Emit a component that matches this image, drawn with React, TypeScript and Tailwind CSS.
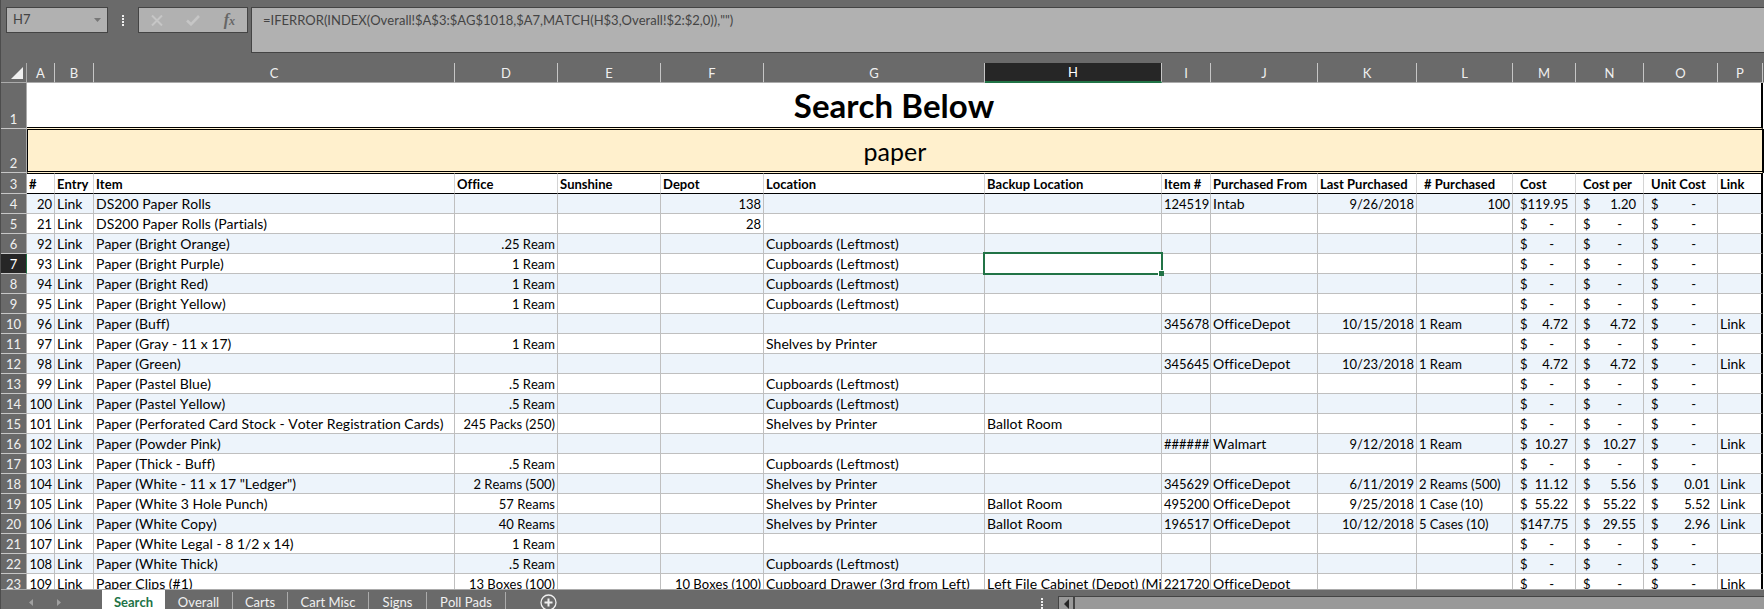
import React, { useState } from "react";

type Align = "left" | "right";

interface Row {
  n: number;
  item: string;
  office?: string;
  depot?: string;
  location?: string;
  backup?: string;
  itemNo?: string;
  vendor?: string;
  date?: string;
  qty?: string;
  cost?: string;
  costPer?: string;
  unit?: string;
  link?: boolean;
}

const CUP = "Cupboards (Leftmost)";
const SHELF = "Shelves by Printer";

const rows: Row[] = [
  { n: 20, item: "DS200 Paper Rolls", depot: "138", itemNo: "124519", vendor: "Intab", date: "9/26/2018", qty: "100", cost: "119.95", costPer: "1.20" },
  { n: 21, item: "DS200 Paper Rolls (Partials)", depot: "28" },
  { n: 92, item: "Paper (Bright Orange)", office: ".25 Ream", location: CUP },
  { n: 93, item: "Paper (Bright Purple)", office: "1 Ream", location: CUP },
  { n: 94, item: "Paper (Bright Red)", office: "1 Ream", location: CUP },
  { n: 95, item: "Paper (Bright Yellow)", office: "1 Ream", location: CUP },
  { n: 96, item: "Paper (Buff)", itemNo: "345678", vendor: "OfficeDepot", date: "10/15/2018", qty: "1 Ream", cost: "4.72", costPer: "4.72", link: true },
  { n: 97, item: "Paper (Gray - 11 x 17)", office: "1 Ream", location: SHELF },
  { n: 98, item: "Paper (Green)", itemNo: "345645", vendor: "OfficeDepot", date: "10/23/2018", qty: "1 Ream", cost: "4.72", costPer: "4.72", link: true },
  { n: 99, item: "Paper (Pastel Blue)", office: ".5 Ream", location: CUP },
  { n: 100, item: "Paper (Pastel Yellow)", office: ".5 Ream", location: CUP },
  { n: 101, item: "Paper (Perforated Card Stock - Voter Registration Cards)", office: "245 Packs (250)", location: SHELF, backup: "Ballot Room" },
  { n: 102, item: "Paper (Powder Pink)", itemNo: "######", vendor: "Walmart", date: "9/12/2018", qty: "1 Ream", cost: "10.27", costPer: "10.27", link: true },
  { n: 103, item: "Paper (Thick - Buff)", office: ".5 Ream", location: CUP },
  { n: 104, item: 'Paper (White - 11 x 17 "Ledger")', office: "2 Reams (500)", location: SHELF, itemNo: "345629", vendor: "OfficeDepot", date: "6/11/2019", qty: "2 Reams (500)", cost: "11.12", costPer: "5.56", unit: "0.01", link: true },
  { n: 105, item: "Paper (White 3 Hole Punch)", office: "57 Reams", location: SHELF, backup: "Ballot Room", itemNo: "495200", vendor: "OfficeDepot", date: "9/25/2018", qty: "1 Case (10)", cost: "55.22", costPer: "55.22", unit: "5.52", link: true },
  { n: 106, item: "Paper (White Copy)", office: "40 Reams", location: SHELF, backup: "Ballot Room", itemNo: "196517", vendor: "OfficeDepot", date: "10/12/2018", qty: "5 Cases (10)", cost: "147.75", costPer: "29.55", unit: "2.96", link: true },
  { n: 107, item: "Paper (White Legal - 8 1/2 x 14)", office: "1 Ream" },
  { n: 108, item: "Paper (White Thick)", office: ".5 Ream", location: CUP },
  { n: 109, item: "Paper Clips (#1)", office: "13 Boxes (100)", depot: "10 Boxes (100)", location: "Cupboard Drawer (3rd from Left)", backup: "Left File Cabinet (Depot) (Mi", itemNo: "221720", vendor: "OfficeDepot", link: true },
];

const columns = [
  { letter: "A", width: "w-[28px]", title: "#", pad: "px-[2px]" },
  { letter: "B", width: "w-[39px]", title: "Entry", pad: "px-[2px]" },
  { letter: "C", width: "w-[361px]", title: "Item", pad: "px-[2px]" },
  { letter: "D", width: "w-[103px]", title: "Office", pad: "px-[2px]" },
  { letter: "E", width: "w-[103px]", title: "Sunshine", pad: "px-[2px]" },
  { letter: "F", width: "w-[103px]", title: "Depot", pad: "px-[2px]" },
  { letter: "G", width: "w-[221px]", title: "Location", pad: "px-[2px]" },
  { letter: "H", width: "w-[177px]", title: "Backup Location", pad: "px-[2px]" },
  { letter: "I", width: "w-[49px]", title: "Item #", pad: "px-[2px]" },
  { letter: "J", width: "w-[107px]", title: "Purchased From", pad: "px-[2px]" },
  { letter: "K", width: "w-[99px]", title: "Last Purchased", pad: "px-[2px]" },
  { letter: "L", width: "w-[96px]", title: "# Purchased", pad: "px-[7px]" },
  { letter: "M", width: "w-[63px]", title: "Cost", pad: "px-[7px]" },
  { letter: "N", width: "w-[68px]", title: "Cost per", pad: "px-[7px]" },
  { letter: "O", width: "w-[74px]", title: "Unit Cost", pad: "px-[7px]" },
  { letter: "P", width: "w-[45px]", title: "Link", pad: "px-[2px]" },
];

const tabs = [
  { name: "Search", width: "w-[63px]" },
  { name: "Overall", width: "w-[68px]" },
  { name: "Carts", width: "w-[55px]" },
  { name: "Cart Misc", width: "w-[81px]" },
  { name: "Signs", width: "w-[58px]" },
  { name: "Poll Pads", width: "w-[79px]" },
];

const SELECTED_ROW = 7;

function RowHeader({ n }: { n: number }) {
  const active = n === SELECTED_ROW;
  return (
    <th
      scope="row"
      className={
        active
          ? "border-r border-b border-r-[#217346] border-b-[#c6c6c6] bg-[#262626] p-0 align-bottom font-normal text-white"
          : "border-r border-b border-r-[#ababab] border-b-[#c6c6c6] bg-[#6a6a6a] p-0 align-bottom font-normal text-[#f0f0f0]"
      }
    >
      {n}
    </th>
  );
}

function Cell({ children, align = "left" }: { children?: React.ReactNode; align?: Align }) {
  return (
    <td className="border-r border-b border-[#bfbfbf] p-0">
      <div
        className={
          align === "right"
            ? "overflow-hidden px-[2px] pt-[2px] text-right whitespace-nowrap"
            : "overflow-hidden px-[2px] pt-[2px] whitespace-nowrap"
        }
      >
        {children}
      </div>
    </td>
  );
}

function TextCell({ children }: { children?: React.ReactNode }) {
  return (
    <td className="border-r border-b border-[#bfbfbf] p-0 align-top">
      <div className="overflow-hidden px-[2px] py-px text-[14px] leading-[17px] whitespace-nowrap">{children}</div>
    </td>
  );
}

function MoneyCell({ value }: { value?: string }) {
  return (
    <td className="border-r border-b border-[#bfbfbf] p-0">
      <div className="flex justify-between pt-[2px] pl-[7px]">
        <span className="w-2">$</span>
        <span className={value ? "pr-[7px]" : "pr-[21px]"}>{value ?? "-"}</span>
      </div>
    </td>
  );
}

function Sheet() {
  const [query, setQuery] = useState("paper");
  return (
    <table className="w-full table-fixed border-separate border-spacing-0 text-[13px] leading-[17px] text-black">
      <colgroup>
        <col className="w-[26px]" />
        {columns.map((c) => (
          <col key={c.letter} className={c.width} />
        ))}
        <col />
      </colgroup>
      <thead>
        <tr className="h-5 bg-[#6a6a6a] text-[#f0f0f0]">
          <th className="border-r border-b border-[#ababab] p-0">
            <button type="button" aria-label="Select all" className="flex w-full justify-end pr-[3px]">
              <svg width="12" height="12" viewBox="0 0 12 12" aria-hidden="true">
                <path d="M12 0V12H0Z" fill="#f0f0f0" />
              </svg>
            </button>
          </th>
          {columns.map((c) => (
            <th
              key={c.letter}
              scope="col"
              className={
                c.letter === "H"
                  ? "border-r border-b-2 border-r-[#c6c6c6] border-b-[#217346] bg-[#262626] p-0 pt-px font-normal text-white"
                  : "border-r border-b border-r-[#c6c6c6] border-b-[#ababab] p-0 pt-px font-normal"
              }
            >
              {c.letter}
            </th>
          ))}
          <th className="border-b border-[#ababab] p-0" />
        </tr>
      </thead>
      <tbody className="bg-white">
        <tr className="h-[46px]">
          <RowHeader n={1} />
          <td
            colSpan={16}
            className="border-r-2 border-b border-r-black border-b-[#fff0cd] p-0 text-center text-[33px] leading-[45px] font-bold shadow-[inset_0_-1px_0_#000]"
          >
            Search Below
          </td>
          <td className="p-0" />
        </tr>
        <tr className="h-[44px]">
          <RowHeader n={2} />
          <td
            colSpan={16}
            className="border-x border-t border-b border-x-black border-t-black border-b-[#fff0cd] bg-[#fff0cd] p-0 shadow-[inset_0_-1px_0_#000]"
          >
            <input
              aria-label="Search"
              value={query}
              onChange={(e) => setQuery(e.target.value)}
              className="block w-full bg-transparent text-center text-[25px] leading-[40px] outline-none"
            />
          </td>
          <td className="border-r border-black p-0" />
        </tr>
        <tr className="h-[21px]">
          <RowHeader n={3} />
          {columns.map((c) => (
            <td
              key={c.letter}
              className={
                c.letter === "P"
                  ? "border-t border-r-2 border-b border-black p-0 font-bold"
                  : "border-t border-r border-b border-t-black border-r-[#d4d4d4] border-b-black p-0 font-bold"
              }
            >
              <div className={`overflow-hidden pt-[2px] whitespace-nowrap ${c.pad}`}>{c.title}</div>
            </td>
          ))}
          <td className="p-0" />
        </tr>
        {rows.map((r, i) => {
          const n = i + 4;
          return (
            <tr key={r.n} className={i % 2 === 0 ? "h-5 bg-[#edf4fb]" : "h-5 bg-white"}>
              <RowHeader n={n} />
              <Cell align="right">{r.n}</Cell>
              <TextCell>
                <a href="#entry">Link</a>
              </TextCell>
              <TextCell>{r.item}</TextCell>
              <Cell align="right">{r.office}</Cell>
              <Cell />
              <Cell align="right">{r.depot}</Cell>
              <TextCell>{r.location}</TextCell>
              {n === SELECTED_ROW ? (
                <td className="relative border-r border-b border-[#bfbfbf] p-0" aria-selected="true">
                  <div className="absolute -inset-[2px] border-2 border-[#217346]" />
                  <div className="absolute -right-[3px] -bottom-[3px] size-[6px] border-t border-l border-white bg-[#217346]" />
                </td>
              ) : (
                <TextCell>{r.backup}</TextCell>
              )}
              <Cell align="right">{r.itemNo}</Cell>
              <TextCell>{r.vendor}</TextCell>
              <Cell align="right">{r.date}</Cell>
              <Cell align={r.qty === "100" ? "right" : "left"}>{r.qty}</Cell>
              <MoneyCell value={r.cost} />
              <MoneyCell value={r.costPer} />
              <MoneyCell value={r.unit} />
              <td className="border-r-2 border-b border-r-black border-b-[#bfbfbf] px-[2px] pt-px pb-0 align-top text-[14px] leading-[17px]">
                {r.link && <a href="#link">Link</a>}
              </td>
              <td className="bg-white p-0" />
            </tr>
          );
        })}
      </tbody>
    </table>
  );
}

function FormulaBar() {
  return (
    <div className="flex h-[63px] shrink-0 items-start pt-[7px] pl-[5px] text-[13px] text-[#444]">
      <div className="flex h-[26px] w-[102px] items-center border border-[#444] bg-[#b1b1b1] pr-[6px] pl-[6px]">
        <input aria-label="Name box" defaultValue="H7" className="min-w-0 flex-1 bg-transparent outline-none" />
        <button type="button" aria-label="Open name list">
          <svg width="7" height="4" viewBox="0 0 7 4" aria-hidden="true">
            <path d="M0 0H7L3.5 4Z" fill="#777" />
          </svg>
        </button>
      </div>
      <div className="flex h-[26px] w-[30px] items-center justify-center">
        <svg width="2" height="11" viewBox="0 0 2 11" fill="#f0f0f0" aria-hidden="true">
          <path d="M0 0h2v2H0zM0 3h2v2H0zM0 6h2v2H0zM0 9h2v2H0z" />
        </svg>
      </div>
      <div className="mr-[3px] flex h-[26px] w-[110px] items-center justify-between border border-[#444] bg-[#b1b1b1] pr-[12px] pl-[12px]">
        <button type="button" aria-label="Cancel">
          <svg width="12" height="11" viewBox="0 0 12 11" fill="none" stroke="#c6c6c6" strokeWidth="2" aria-hidden="true">
            <path d="M1 .5L11 10.5M11 .5L1 10.5" />
          </svg>
        </button>
        <button type="button" aria-label="Enter">
          <svg width="14" height="11" viewBox="0 0 14 11" fill="none" stroke="#c6c6c6" strokeWidth="2.6" aria-hidden="true">
            <path d="M1 5.5L5 9.3L13 1" />
          </svg>
        </button>
        <button type="button" aria-label="Insert function" className="font-['Liberation_Serif',serif] text-[16px] leading-[18px] font-bold text-[#666] italic">
          f<span className="text-[12px]">x</span>
        </button>
      </div>
      <textarea
        aria-label="Formula"
        defaultValue={'=IFERROR(INDEX(Overall!$A$3:$AG$1018,$A7,MATCH(H$3,Overall!$2:$2,0)),"")'}
        className="h-[46px] min-w-0 flex-1 resize-none border border-r-0 border-[#444] bg-[#b1b1b1] py-[3px] pl-[11px] leading-[19px] outline-none"
      />
    </div>
  );
}

function BottomBar() {
  return (
    <div className="flex h-5 shrink-0 overflow-hidden border-t border-[#ababab] text-[13px] leading-[24px] text-[#f0f0f0]">
      <div className="flex w-[101px] items-start gap-[24px] pt-[9px] pl-[28px]">
        <button type="button" aria-label="Previous sheet">
          <svg width="4" height="7" viewBox="0 0 4 7" aria-hidden="true">
            <path d="M4 0V7L0 3.5Z" fill="#a0a0a0" />
          </svg>
        </button>
        <button type="button" aria-label="Next sheet">
          <svg width="4" height="7" viewBox="0 0 4 7" aria-hidden="true">
            <path d="M0 0V7L4 3.5Z" fill="#a0a0a0" />
          </svg>
        </button>
      </div>
      <div role="tablist" className="flex">
        {tabs.map((t, i) => (
          <button
            key={t.name}
            type="button"
            role="tab"
            aria-selected={i === 0}
            className={
              i === 0
                ? `${t.width} h-6 bg-white font-bold text-[#217346]`
                : `${t.width} mt-[2px] h-5 border-r border-[#ababab] leading-[20px]`
            }
          >
            {t.name}
          </button>
        ))}
      </div>
      <button type="button" aria-label="New sheet" className="mt-1 ml-[34px] size-[17px]">
        <svg width="17" height="17" viewBox="0 0 17 17" fill="none" stroke="#f0f0f0" aria-hidden="true">
          <circle cx="8.5" cy="8.5" r="7.5" strokeWidth="1.3" />
          <path d="M8.5 4.5V12.5M4.5 8.5H12.5" strokeWidth="2" />
        </svg>
      </button>
      <div className="flex-1" />
      <div className="flex w-[41%] pt-[6px]">
        <svg width="2" height="11" viewBox="0 0 2 11" fill="#f0f0f0" className="mt-[2px] mr-[15px]" aria-hidden="true">
          <path d="M0 0h2v2H0zM0 3h2v2H0zM0 6h2v2H0zM0 9h2v2H0z" />
        </svg>
        <button type="button" aria-label="Scroll left" className="flex h-5 w-4 justify-center border border-[#444] bg-[#999] pt-[2px]">
          <svg width="5" height="10" viewBox="0 0 5 10" aria-hidden="true">
            <path d="M5 0V10L0 5Z" fill="#262626" />
          </svg>
        </button>
        <div className="h-5 flex-1 border-t border-l border-[#444] bg-[#999]" />
      </div>
    </div>
  );
}

export default function App() {
  return (
    <div className="flex h-screen flex-col overflow-hidden border-l border-[#4d4d4d] bg-[#6a6a6a] font-['Lato',sans-serif] [font-kerning:none] [font-variant-ligatures:none]">
      <FormulaBar />
      <main className="min-h-0 flex-1 overflow-hidden">
        <Sheet />
      </main>
      <BottomBar />
    </div>
  );
}
